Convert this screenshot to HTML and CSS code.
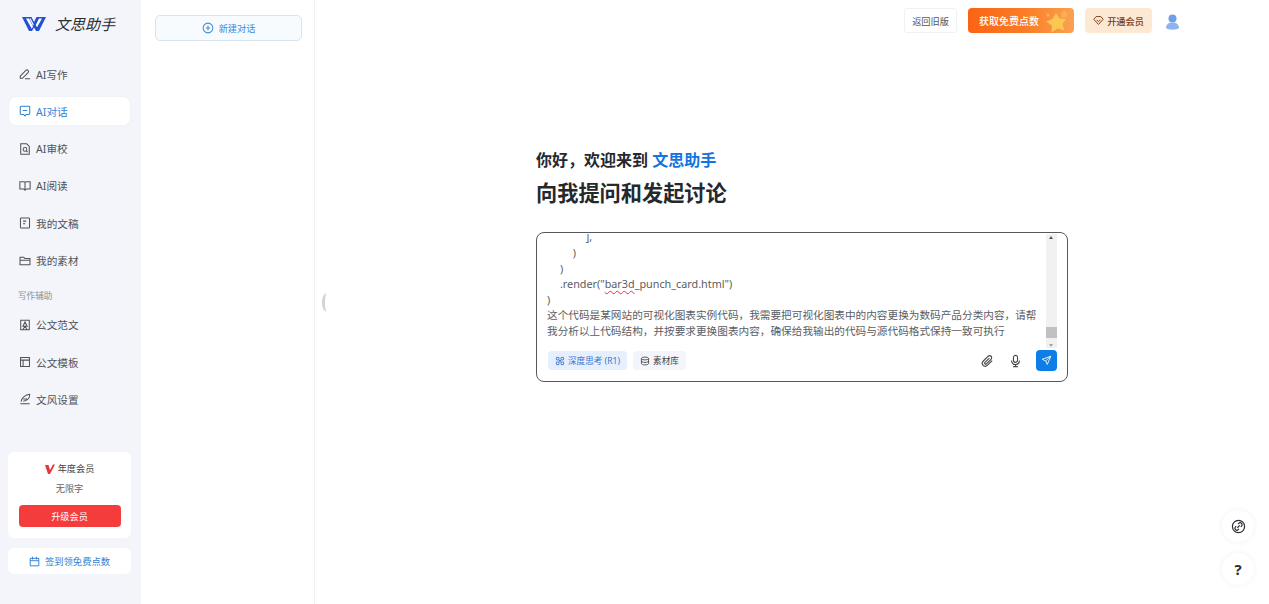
FILE: index.html
```html
<!DOCTYPE html>
<html lang="zh-CN">
<head>
<meta charset="utf-8">
<title>文思助手</title>
<link rel="stylesheet" href="styles.css">
</head>
<body>
<div class="app">
  <aside class="sidebar">
    <div class="logo">
      <svg class="logo-mark" viewBox="0 0 24 14"><path d="M0 0h9.500L12 5l2.500-5H24l-7 14h-3l-2-3.500L10 14H7z" fill="#2450d6"/><path d="M4 1.500h3l4 8-1.200 2.200zM20 1.500h-3l-3.200 6.400 1.200 2.400z" fill="#fff"/><path d="M7.500 1.500h1.200l3 6-.7 1.300z" fill="#fff"/></svg>
      <span class="logo-text">文思助手</span>
    </div>
    <nav class="nav">
      <a class="nav-item"><svg class="ico" viewBox="0 0 14 14"><path d="M1.500 9.500 8 2.800a1.800 1.800 0 0 1 2.600 2.500L4 12H1.500zM7 12.500h6"/></svg>AI写作</a>
      <a class="nav-item active"><svg class="ico" viewBox="0 0 14 14"><path d="M2.500 1.500h9a1 1 0 0 1 1 1v7.500a1 1 0 0 1-1 1H8.500L7 12.800 5.500 11h-3a1 1 0 0 1-1-1V2.500a1 1 0 0 1 1-1zM4.500 6.300h5"/></svg>AI对话</a>
      <a class="nav-item"><svg class="ico" viewBox="0 0 14 14"><path d="M2 1h7l3 3v9H2z"/><circle cx="7" cy="7.500" r="2.200"/><path d="M8.500 9.200 10 10.500"/></svg>AI审校</a>
      <a class="nav-item"><svg class="ico" viewBox="0 0 14 14"><path d="M1 2h5l1 1 1-1h5v8.500H8.500L7 12l-1.500-1.500H1zM7 3v8"/></svg>AI阅读</a>
      <a class="nav-item"><svg class="ico" viewBox="0 0 14 14"><path d="M2.500 1.200h9a.8.8 0 0 1 .8.800v10a.8.8 0 0 1-.8.800h-9a.8.800 0 0 1-.8-.8V2a.8.800 0 0 1 .8-.8zM4.800 4.800h3.500M4.800 8h2.500"/></svg>我的文稿</a>
      <a class="nav-item"><svg class="ico" viewBox="0 0 14 14"><path d="M1.200 2.500h4.300l1.300 1.500h6v7.500H1.200zM1.200 6h11.600"/></svg>我的素材</a>
      <div class="nav-label">写作辅助</div>
      <a class="nav-item"><svg class="ico" viewBox="0 0 14 14"><path d="M2 1.500h10v11H2zM7 3.500 4.500 8.500h5zM4.500 12.500 7 8.500l2.500 4"/></svg>公文范文</a>
      <a class="nav-item"><svg class="ico" viewBox="0 0 14 14"><path d="M1.800 1.800h10.400v10.400H1.800zM1.800 4.800h10.400M4.800 4.800v7.400"/></svg>公文模板</a>
      <a class="nav-item"><svg class="ico" viewBox="0 0 14 14"><path d="M2.500 10C3 5.500 7.500 2 12.500 1.500 12.500 6 9.500 9 5 9.500M5 7h4.500M1.500 12.500h11"/></svg>文风设置</a>
    </nav>
    <div class="member-card">
      <div class="member-title"><svg class="member-v" viewBox="0 0 10 10"><path d="M0 1h3.500L5 6l3-5.500h2L5 10H3z" fill="#e8343f"/></svg>年度会员</div>
      <div class="member-limit">无限字</div>
      <button class="upgrade">升级会员</button>
    </div>
    <a class="checkin"><svg class="ico" viewBox="0 0 14 14"><path d="M1.500 3h11v9.500h-11zM4.500 1v3.500M9.500 1v3.500M1.500 6h11"/></svg>签到领免费点数</a>
  </aside>

  <section class="history">
    <button class="new-chat"><svg class="ico" viewBox="0 0 14 14"><circle cx="7" cy="7" r="5.700"/><path d="M7 4.500v5M4.500 7h5"/></svg>新建对话</button>
  </section>
  <div class="collapse-handle"></div>

  <main class="main">
    <header class="topbar">
      <button class="btn-old">返回旧版</button>
      <button class="btn-points">获取免费点数<svg class="stars" viewBox="0 0 32 25"><path d="M14 5l3.500 5.500 6.500.5-3.500 5 2 6.500-7-2-6 4 .5-7L4 13.500l6.500-2.500z" fill="#fcc653"/><path d="M22 2l1.500 2.500 3 .5-2 2 .5 3-3-1.300-2.700 1.300.5-3-2-2 3-.5z" fill="#f9b24d"/><circle cx="6" cy="7" r="1.500" fill="#fbb45e"/></svg></button>
      <button class="btn-vip"><svg class="ico" viewBox="0 0 14 14"><path d="M4 2h6l3 3.500L7 12 1 5.500zM4.500 6 7 8.500 9.500 6"/></svg>开通会员</button>
      <svg class="avatar" viewBox="0 0 13 16"><circle cx="6.500" cy="4.500" r="4" fill="#6f9fe8"/><path d="M0 14c0-3.500 2.500-5.500 6.500-5.500s6.500 2 6.500 5.500c-2 2.200-11 2.200-13 0z" fill="#8fb3ec"/></svg>
    </header>

    <div class="stage">
      <p class="hello">你好，欢迎来到 <span class="brand">文思助手</span></p>
      <h1 class="headline">向我提问和发起讨论</h1>
      <div class="composer">
        <div class="editor">
          <div class="editor-text"><div class="line code">            ],</div><div class="line code">        )</div><div class="line code">    )</div><div class="line code">    .render("<span class="typo">bar3d</span>_punch_card.html")</div><div class="line code">)</div><div class="line">这个代码是某网站的可视化图表实例代码，我需要把可视化图表中的内容更换为数码产品分类内容，请帮</div><div class="line">我分析以上代码结构，并按要求更换图表内容，确保给我输出的代码与源代码格式保持一致可执行</div></div>
          <div class="scrollbar">
            <span class="arrow-up"></span>
            <span class="thumb"></span>
            <span class="arrow-down"></span>
          </div>
        </div>
        <div class="composer-bar">
          <button class="chip chip-on"><svg class="ico" viewBox="0 0 14 14"><path d="M2 2h3.500v3.500H2zM8.500 2H12v3.500H8.500zM2 8.500h3.500V12H2zM8.500 8.500H12V12H8.500zM5.500 5.500l3 3M8.500 5.500l-3 3"/></svg>深度思考 (R1)</button>
          <button class="chip"><svg class="ico" viewBox="0 0 14 14"><ellipse cx="7" cy="3.500" rx="5" ry="2"/><path d="M2 3.500v7c0 1.100 2.200 2 5 2s5-.9 5-2v-7M2 7c0 1.100 2.200 2 5 2s5-.9 5-2"/></svg>素材库</button>
          <span class="bar-space"></span>
          <svg class="tool tool-clip" viewBox="0 0 14 14"><path d="M12 6.500 7 11.500c-1.500 1.500-3.500 1.500-4.700.3S1 8.500 2.500 7l5-5c1-1 2.400-1 3.300-.1s.9 2.300-.1 3.300L5.800 10c-.5.500-1.200.5-1.600.1s-.4-1.100.1-1.600L9 3.800"/></svg>
          <svg class="tool tool-mic" viewBox="0 0 14 14"><rect x="4.800" y="1" width="4.400" height="7.500" rx="2.200"/><path d="M2.800 6.500c0 2.800 1.800 4.300 4.200 4.300s4.200-1.500 4.200-4.300M7 10.800V13M4.500 13h5"/></svg>
          <button class="send"><svg viewBox="0 0 14 14"><path d="M12.500 1.500 1.500 5.500l4.500 2 2 4.500zM6 7.500l6.500-6"/></svg></button>
        </div>
      </div>
    </div>

    <button class="float float-link"><svg viewBox="0 0 16 16"><circle cx="8" cy="8" r="6.500"/><path d="M6.800 9.300 9.300 6.800M7.500 5.500l.8-.8a1.900 1.900 0 0 1 2.900 2.900l-.8.800M8.500 10.500l-.8.800a1.900 1.900 0 0 1-2.900-2.900l.8-.8"/></svg></button>
    <button class="float float-help">?</button>
  </main>
</div>
</body>
</html>
```

FILE: styles.css
```css
* { box-sizing: border-box; }
html, body { margin: 0; height: 100%; overflow: hidden; background: #fff; }
body {
  font-family: "Noto Sans", "Noto Sans CJK SC", sans-serif;
  font-size: 10.65px;
  color: #4a4e55;
}
button { font: inherit; border: 0; padding: 0; background: none; color: inherit; }
.ico { width: 12px; height: 12px; flex: none; fill: none; stroke: currentColor; stroke-width: 1.2; }

.app { display: flex; height: 604px; position: relative; }

/* sidebar */
.sidebar {
  width: 141px;
  flex: none;
  background: #f3f5fa;
  padding: 14px 10px 30px 8px;
  display: flex;
  flex-direction: column;
}
.logo { display: flex; align-items: center; height: 20px; padding-left: 14px; gap: 9px; }
.logo-mark { width: 24px; height: 14px; }
.logo-text {
  font-family: "Noto Sans CJK SC", sans-serif;
  font-style: italic;
  font-size: 15px;
  line-height: 20px;
  color: #2b2e33;
}
.nav { display: flex; flex-direction: column; gap: 9.330px; margin-top: 26px; padding: 0 1px; }
.nav-item {
  height: 28px;
  display: flex;
  align-items: center;
  gap: 5px;
  padding-left: 10px;
  border-radius: 7px;
  color: #4f535a;
}
.nav-item .ico { width: 12px; height: 12px; }
.nav-item.active { background: #fff; color: #2f82d6; box-shadow: 0 0 3px rgba(30, 60, 120, .04); }
.nav-label { height: 12px; margin: 6px 0 -.5px; padding-left: 9px; font-size: 8.600px; line-height: 12px; color: #8b8f96; }

.member-card {
  margin-top: auto;
  height: 86px;
  background: #fff;
  border-radius: 6px;
  display: flex;
  flex-direction: column;
  align-items: center;
  padding-top: 10px;
}
.member-title { display: flex; align-items: center; justify-content: center; gap: 3px; height: 13px; font-size: 9.200px; line-height: 13px; color: #444; }
.member-v { width: 10px; height: 10px; }
.member-limit { margin-top: 7px; height: 13px; font-size: 9.200px; line-height: 13px; color: #666; }
.upgrade {
  margin-top: 10px;
  width: 102px;
  height: 22px;
  background: #f53c3c;
  color: #fff;
  border-radius: 4px;
  font-size: 9.200px;
}
.checkin {
  margin-top: 10px;
  height: 26px;
  background: #fff;
  border-radius: 6px;
  display: flex;
  align-items: center;
  justify-content: center;
  gap: 5px;
  color: #2f7fd2;
  font-size: 9.300px;
}
.checkin .ico { width: 11px; height: 11px; }

/* history column */
.history { width: 174px; flex: none; border-right: 1px solid #eff1f4; padding: 15px 12px 0 14px; }
.new-chat {
  width: 147px;
  height: 26px;
  display: flex;
  align-items: center;
  justify-content: center;
  gap: 5px;
  background: #f8fbfe;
  border: 1px solid #d8e4ef;
  border-radius: 5px;
  color: #3a8ad8;
  font-size: 9.200px;
}
.new-chat .ico { width: 12px; height: 12px; }
.collapse-handle {
  position: absolute;
  left: 322px;
  top: 293px;
  width: 5px;
  height: 19px;
  border-left: 3px solid #d0d3d7;
  border-radius: 5px 0 0 5px / 10px 0 0 10px;
}

/* main */
.main { flex: 1; min-width: 0; position: relative; }
.topbar { height: 41px; display: flex; align-items: flex-start; padding: 8px 90px 0 0; justify-content: flex-end; }
.btn-old {
  width: 53px; height: 25px; margin-right: 11px;
  border: 1px solid #f0f1f3; border-radius: 3px; background: #fff;
  font-size: 9.200px; color: #555;
}
.btn-points {
  width: 106px; height: 25px; margin-right: 11px; padding-left: 11px;
  display: flex; align-items: center; justify-content: space-between;
  border-radius: 4px; color: #fff; font-size: 10px; font-weight: 500;
  background: linear-gradient(90deg, #fa6414 0%, #fb7d26 55%, #f9a253 100%);
  overflow: hidden;
}
.stars { width: 32px; height: 25px; }
.btn-vip {
  width: 67px; height: 25px; margin-right: 14px;
  display: flex; align-items: center; justify-content: center; gap: 3px;
  border-radius: 4px; background: #fde8d3; color: #7a3c16; font-size: 9.200px; font-weight: 500;
}
.btn-vip .ico { width: 11px; height: 11px; }
.avatar { width: 13px; height: 16px; margin-top: 6px; }

.stage { width: 532px; margin: 108px 0 0 221px; }
.hello { margin: 0; height: 22px; font-size: 16px; line-height: 22px; font-weight: 700; color: #25282d; }
.brand { color: #1374e0; }
.headline { margin: 7px 0 0; height: 29px; font-size: 21.200px; line-height: 29px; font-weight: 700; color: #25282d; }
.composer {
  margin-top: 25px;
  height: 150px;
  border: 1px solid #55585c;
  border-radius: 8px;
  padding: 1px 10px 0;
  display: flex;
  flex-direction: column;
}
.editor { height: 114px; display: flex; }
.editor-text {
  flex: 1;
  min-width: 0;
  overflow: hidden;
  display: flex;
  flex-direction: column;
  justify-content: flex-end;
  padding-bottom: 8.500px;
  color: #5a5d63;
}
.line { flex: none; height: 15.800px; line-height: 15.800px; white-space: pre; }
.code { font-size: 10.800px; word-spacing: .42px; }
.typo { text-decoration: underline wavy #e0393e 1px; text-underline-offset: 2px; }
.scrollbar {
  width: 11px;
  flex: none;
  background: #f1f1f1;
  position: relative;
}
.arrow-up, .arrow-down { position: absolute; left: 3px; width: 0; height: 0; border: 2.500px solid transparent; }
.arrow-up { top: 2px; border-bottom: 3px solid #555; border-top: 0; }
.arrow-down { bottom: 1px; border-top: 3px solid #a3a3a3; border-bottom: 0; }
.thumb { position: absolute; left: 0; right: 0; top: 93px; height: 11px; background: #c1c1c1; }

.composer-bar { flex: 1; display: flex; align-items: flex-start; gap: 6px; padding: 3px 0 0 1px; }
.chip {
  height: 19px;
  padding: 0 7px;
  display: flex;
  align-items: center;
  gap: 3px;
  background: #f3f5fa;
  border-radius: 4px;
  font-size: 8.600px;
  color: #444;
}
.chip .ico { width: 10px; height: 10px; }
.chip-on { background: #e6effc; color: #3f76d2; }
.bar-space { flex: 1; }
.tool { width: 13px; height: 14px; margin-top: 3px; fill: none; stroke: #44474c; stroke-width: 1.200; }
.tool-clip { margin-right: 9px; }
.tool-mic { margin-right: 8px; }
.send { width: 21px; height: 21px; margin-top: -1px; border-radius: 4px; background: #0d7ee8; display: flex; align-items: center; justify-content: center; }
.send svg { width: 11px; height: 11px; fill: none; stroke: #fff; stroke-width: 1.100; }

.float {
  position: absolute;
  right: 15px;
  width: 32px;
  height: 32px;
  border-radius: 50%;
  background: #fff;
  box-shadow: 0 0 6px rgba(0, 0, 0, .06);
  display: flex;
  align-items: center;
  justify-content: center;
}
.float-link { top: 510px; }
.float-link svg { width: 15px; height: 15px; fill: none; stroke: #2b2e33; stroke-width: 1.300; }
.float-help { top: 553px; font-size: 15px; font-weight: 700; color: #2b2e33; }
```
